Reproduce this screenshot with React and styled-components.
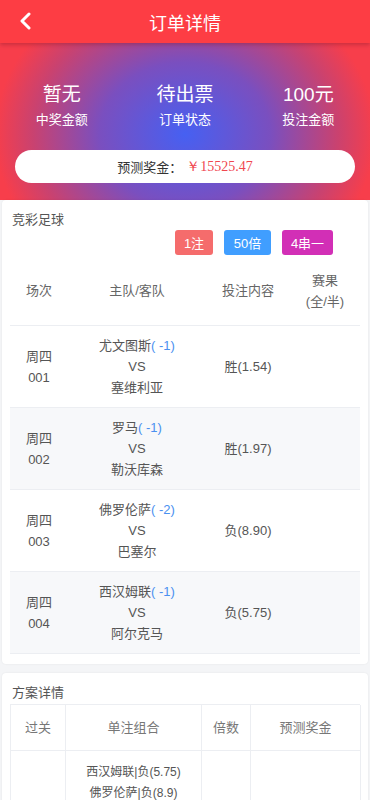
import React from "react";
import styled, { createGlobalStyle } from "styled-components";

const Global = createGlobalStyle`
  body {
    margin: 0;
    background: #f4f5f7;
    font-family: "Liberation Sans", Arial, "Noto Sans CJK SC", sans-serif;
  }
`;

const Page = styled.div`
  width: 370px;
  min-height: 800px;
  background: #f4f5f7;
`;

const NavBar = styled.div`
  height: 43px;
  background: #fd3d44;
  display: flex;
  align-items: center;
  justify-content: center;
  position: relative;
  z-index: 2;
  box-shadow: 0 2px 4px rgba(120, 20, 40, 0.35);
`;

const Back = styled.div`
  position: absolute;
  left: 18px;
  top: 12px;
  width: 16px;
  height: 18px;
`;

const NavTitle = styled.div`
  color: #fff;
  font-size: 18px;
`;

const Hero = styled.div`
  height: 157px;
  background: radial-gradient(ellipse 190px 160px at 50% 58%, #4660f2 0%, #7a4fbf 45%, #c94270 80%, #f73e4b 100%);
  box-sizing: border-box;
  display: flex;
  flex-direction: column;
`;

const Stats = styled.div`
  display: grid;
  grid-template-columns: repeat(3, 1fr);
  padding-top: 40px;
  height: 107px;
  box-sizing: border-box;
`;

const Stat = styled.div`
  display: flex;
  flex-direction: column;
  align-items: center;
  color: #fff;
`;

const StatValue = styled.div`
  font-size: 19px;
  line-height: 24px;
`;

const StatLabel = styled.div`
  font-size: 13px;
  line-height: 18px;
  margin-top: 4px;
`;

const Pill = styled.div`
  height: 33px;
  margin: 0 15px;
  border-radius: 17px;
  background: #fff;
  display: flex;
  align-items: center;
  justify-content: center;
  font-size: 13px;
  color: #333;
`;

const Money = styled.span`
  color: #f0474f;
  font-family: "Liberation Serif", serif;
  font-size: 14px;
  margin-left: 4px;
`;

const Card = styled.div`
  background: #fff;
  margin: ${(p) => p.$m};
  padding: 0 8px 10px 8px;
  border-radius: 4px;
  box-shadow: 0 0 2px rgba(0, 0, 0, 0.08);
`;

const CardTitle = styled.div`
  font-size: 13px;
  color: #555;
  padding: 11px 2px 0 2px;
  line-height: 18px;
`;

const Tags = styled.div`
  display: flex;
  gap: 11px;
  padding: 1px 0 0 165px;
  height: 25px;
`;

const Tag = styled.div`
  background: ${(p) => p.$bg};
  color: #fff;
  font-size: 13px;
  border-radius: 3px;
  width: ${(p) => p.$w}px;
  display: flex;
  align-items: center;
  justify-content: center;
`;

const Grid = styled.div`
  display: grid;
  grid-template-columns: 58px 138px 84px 70px;
  margin-top: 1px;
`;

const Row = styled.div`
  display: contents;
`;

const Cell = styled.div`
  display: flex;
  flex-direction: column;
  align-items: center;
  justify-content: center;
  text-align: center;
  font-size: 13px;
  line-height: 21px;
  color: ${(p) => (p.$head ? "#666" : "#555")};
  height: ${(p) => p.$h}px;
  background: ${(p) => (p.$alt ? "#f7f8fa" : "#fff")};
  border-bottom: 1px solid #eceef2;
`;

const Hcp = styled.span`
  color: #4a90f0;
`;

const DetailTable = styled.div`
  display: grid;
  grid-template-columns: 55px 136px 49px 110px;
  border-left: 1px solid #eceef2;
  border-top: 1px solid #eceef2;
  margin-top: 2px;
`;

const DCell = styled.div`
  border-right: 1px solid #eceef2;
  border-bottom: 1px solid #eceef2;
  color: ${(p) => (p.$head ? "#777" : "#555")};
  line-height: 21px;
  display: flex;
  flex-direction: column;
  align-items: center;
  justify-content: center;
  padding: ${(p) => (p.$head ? 0 : 8)}px 0;
  min-height: ${(p) => p.$h || 0}px;
  font-size: ${(p) => (p.$head ? 13 : 12)}px;
`;

const matches = [
  { day: "周四", no: "001", home: "尤文图斯", hcp: "( -1)", away: "塞维利亚", bet: "胜(1.54)" },
  { day: "周四", no: "002", home: "罗马", hcp: "( -1)", away: "勒沃库森", bet: "胜(1.97)" },
  { day: "周四", no: "003", home: "佛罗伦萨", hcp: "( -2)", away: "巴塞尔", bet: "负(8.90)" },
  { day: "周四", no: "004", home: "西汉姆联", hcp: "( -1)", away: "阿尔克马", bet: "负(5.75)" },
];

export default function App() {
  return (
    <Page>
      <Global />
      <NavBar>
        <Back>
          <svg width="16" height="18" viewBox="0 0 16 18">
            <path d="M11 2 L4 9 L11 16" stroke="#fff" strokeWidth="3" fill="none" strokeLinecap="round" strokeLinejoin="round" />
          </svg>
        </Back>
        <NavTitle>订单详情</NavTitle>
      </NavBar>
      <Hero>
        <Stats>
          <Stat>
            <StatValue>暂无</StatValue>
            <StatLabel>中奖金额</StatLabel>
          </Stat>
          <Stat>
            <StatValue>待出票</StatValue>
            <StatLabel>订单状态</StatLabel>
          </Stat>
          <Stat>
            <StatValue>100元</StatValue>
            <StatLabel>投注金额</StatLabel>
          </Stat>
        </Stats>
        <Pill>
          预测奖金：<Money>￥15525.47</Money>
        </Pill>
      </Hero>
      <Card $m="0 2px 0 2px">
        <CardTitle>竞彩足球</CardTitle>
        <Tags>
          <Tag $bg="#f56c6c" $w={38}>1注</Tag>
          <Tag $bg="#409eff" $w={47}>50倍</Tag>
          <Tag $bg="#d22fb6" $w={51}>4串一</Tag>
        </Tags>
        <Grid>
          <Row>
            <Cell $head $h={69}>场次</Cell>
            <Cell $head $h={69}>主队/客队</Cell>
            <Cell $head $h={69}>投注内容</Cell>
            <Cell $head $h={69}>
              <span>赛果</span>
              <span>(全/半)</span>
            </Cell>
          </Row>
          {matches.map((m, i) => (
            <Row key={m.no}>
              <Cell $h={81} $alt={i % 2 === 1}>
                <span>{m.day}</span>
                <span>{m.no}</span>
              </Cell>
              <Cell $h={81} $alt={i % 2 === 1}>
                <span>
                  {m.home}
                  <Hcp>{m.hcp}</Hcp>
                </span>
                <span>VS</span>
                <span>{m.away}</span>
              </Cell>
              <Cell $h={81} $alt={i % 2 === 1}>{m.bet}</Cell>
              <Cell $h={81} $alt={i % 2 === 1} />
            </Row>
          ))}
        </Grid>
      </Card>
      <Card $m="9px 2px 0 2px">
        <CardTitle>方案详情</CardTitle>
        <DetailTable>
          <DCell $head $h={45}>过关</DCell>
          <DCell $head $h={45}>单注组合</DCell>
          <DCell $head $h={45}>倍数</DCell>
          <DCell $head $h={45}>预测奖金</DCell>
          <DCell $h={90} />
          <DCell $h={90}>
            <span>西汉姆联|负(5.75)</span>
            <span>佛罗伦萨|负(8.9)</span>
            <span>罗马|胜(1.97)</span>
            <span>尤文图斯|胜(1.54)</span>
          </DCell>
          <DCell $h={90} />
          <DCell $h={90} />
        </DetailTable>
      </Card>
    </Page>
  );
}
